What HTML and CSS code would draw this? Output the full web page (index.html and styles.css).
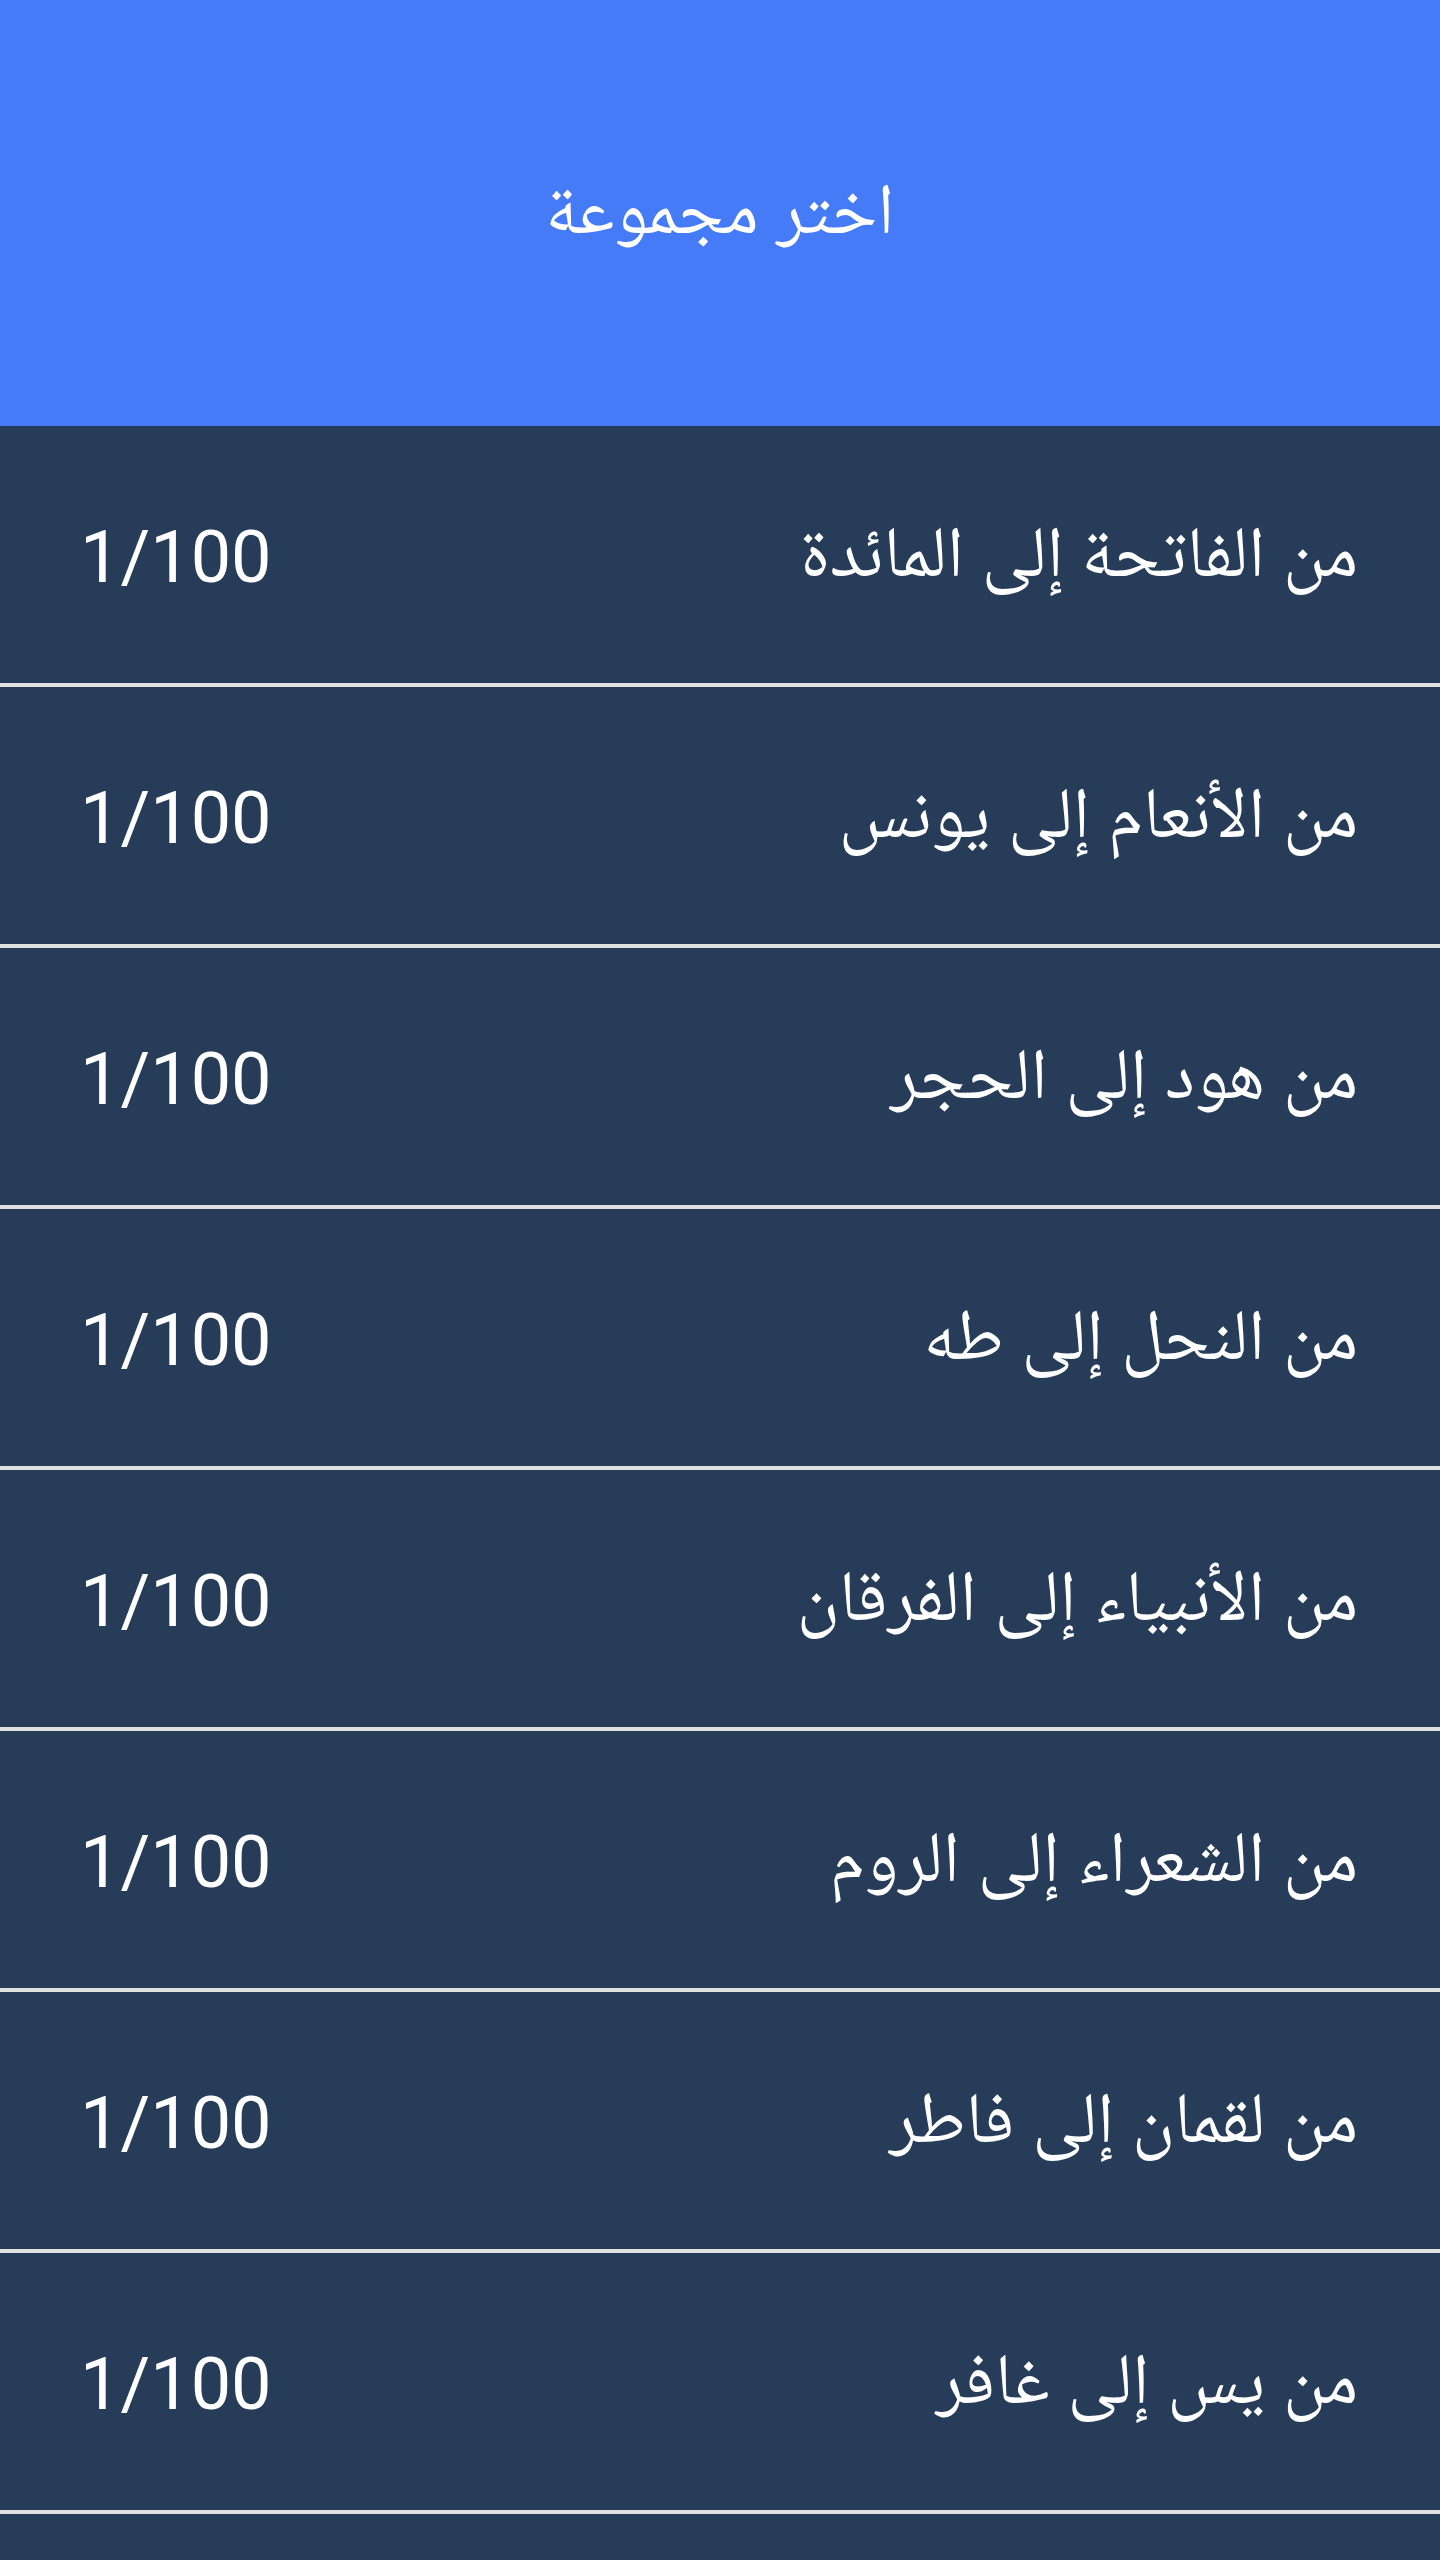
FILE: index.html
```html
<!DOCTYPE html>
<html lang="ar">
<head>
    <meta charset="UTF-8">
    <meta name="viewport" content="width=device-width, initial-scale=1.0">
    <title>اختر مجموعة</title>
    <link rel="stylesheet" href="styles.css">
</head>
<body>
    <header class="top-bar">
        <h1 class="top-title">اختر مجموعة</h1>
    </header>

    <ul class="groups" dir="rtl">
        <li class="group"><span class="group-name">من الفاتحة إلى المائدة</span><span class="group-score">1/100</span></li>
        <li class="group"><span class="group-name">من الأنعام إلى يونس</span><span class="group-score">1/100</span></li>
        <li class="group"><span class="group-name">من هود إلى الحجر</span><span class="group-score">1/100</span></li>
        <li class="group"><span class="group-name">من النحل إلى طه</span><span class="group-score">1/100</span></li>
        <li class="group"><span class="group-name">من الأنبياء إلى الفرقان</span><span class="group-score">1/100</span></li>
        <li class="group"><span class="group-name">من الشعراء إلى الروم</span><span class="group-score">1/100</span></li>
        <li class="group"><span class="group-name">من لقمان إلى فاطر</span><span class="group-score">1/100</span></li>
        <li class="group"><span class="group-name">من يس إلى غافر</span><span class="group-score">1/100</span></li>
    </ul>
</body>
</html>
```

FILE: styles.css
```css
body{
    margin: 0;
    background-color: #273c58;
    color: #fff;
    /* Roboto para os números, Naskh para o árabe */
    font-family: Roboto, "Noto Naskh Arabic", sans-serif;
}

/* barra azul do topo */
.top-bar{
    height: 426px;
    background-color: #457bf7;
    display: flex;
    align-items: center;
    justify-content: center;
}
.top-title{
    margin: 0;
    padding-bottom: 8px;
    font-size: 72px;
    font-weight: normal;
    line-height: 1;
}

/* lista de grupos */
.groups{
    list-style: none;
    margin: 0;
    padding: 0;
}
.group{
    height: 257px;
    border-bottom: 4px solid #e0e0e0;
    display: flex;
    align-items: center;
    justify-content: space-between;
    padding: 0 82px 0 80px;
    font-size: 72px;
    line-height: 1;
}
.group-name{
    padding-bottom: 6px;
}
.group-score{
    direction: ltr;
    padding-top: 6px;
}
```
